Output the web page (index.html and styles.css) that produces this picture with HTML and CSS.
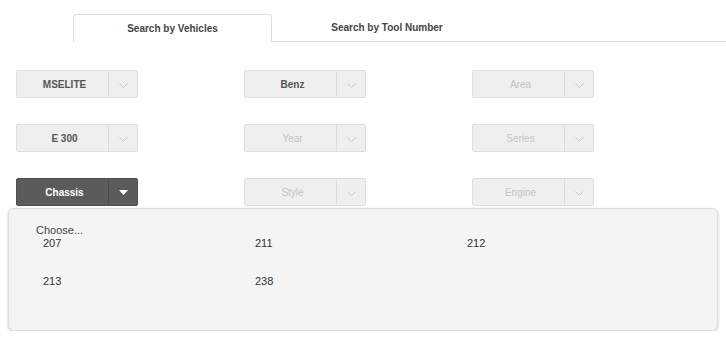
FILE: index.html
```html
<!DOCTYPE html>
<html lang="en">
<head>
  <meta charset="UTF-8" />
  <title>Tool Search</title>
  <link rel="stylesheet" href="styles.css">
</head>
<body>
  <div class="tabs">
    <div class="tab active">Search by Vehicles</div>
    <div class="tab">Search by Tool Number</div>
    <div class="tab-fill"></div>
  </div>

  <div class="selects">
    <div class="drop"><span class="drop-label">MSELITE</span><span class="drop-arrow"><svg width="9" height="5" viewBox="0 0 9 5"><polyline points="0.5,0.5 4.5,4.5 8.5,0.5" fill="none" stroke="#c6c6c6" stroke-width="1"/></svg></span></div>
    <div class="drop"><span class="drop-label">Benz</span><span class="drop-arrow"><svg width="9" height="5" viewBox="0 0 9 5"><polyline points="0.5,0.5 4.5,4.5 8.5,0.5" fill="none" stroke="#c6c6c6" stroke-width="1"/></svg></span></div>
    <div class="drop disabled"><span class="drop-label">Area</span><span class="drop-arrow"><svg width="9" height="5" viewBox="0 0 9 5"><polyline points="0.5,0.5 4.5,4.5 8.5,0.5" fill="none" stroke="#c6c6c6" stroke-width="1"/></svg></span></div>

    <div class="drop"><span class="drop-label">E 300</span><span class="drop-arrow"><svg width="9" height="5" viewBox="0 0 9 5"><polyline points="0.5,0.5 4.5,4.5 8.5,0.5" fill="none" stroke="#c6c6c6" stroke-width="1"/></svg></span></div>
    <div class="drop disabled"><span class="drop-label">Year</span><span class="drop-arrow"><svg width="9" height="5" viewBox="0 0 9 5"><polyline points="0.5,0.5 4.5,4.5 8.5,0.5" fill="none" stroke="#c6c6c6" stroke-width="1"/></svg></span></div>
    <div class="drop disabled"><span class="drop-label">Series</span><span class="drop-arrow"><svg width="9" height="5" viewBox="0 0 9 5"><polyline points="0.5,0.5 4.5,4.5 8.5,0.5" fill="none" stroke="#c6c6c6" stroke-width="1"/></svg></span></div>

    <div class="drop open"><span class="drop-label">Chassis</span><span class="drop-arrow"><svg width="9" height="5" viewBox="0 0 9 5"><polygon points="0,0 9,0 4.5,5" fill="#fff"/></svg></span></div>
    <div class="drop disabled"><span class="drop-label">Style</span><span class="drop-arrow"><svg width="9" height="5" viewBox="0 0 9 5"><polyline points="0.5,0.5 4.5,4.5 8.5,0.5" fill="none" stroke="#c6c6c6" stroke-width="1"/></svg></span></div>
    <div class="drop disabled"><span class="drop-label">Engine</span><span class="drop-arrow"><svg width="9" height="5" viewBox="0 0 9 5"><polyline points="0.5,0.5 4.5,4.5 8.5,0.5" fill="none" stroke="#c6c6c6" stroke-width="1"/></svg></span></div>
  </div>

  <div class="panel">
    <div class="choose">Choose...</div>
    <ul class="options">
      <li>207</li>
      <li>211</li>
      <li>212</li>
      <li>213</li>
      <li>238</li>
    </ul>
  </div>
</body>
</html>
```

FILE: styles.css
```css
body { margin: 0; font-family: "Liberation Sans", Arial, sans-serif; background: #fff; color: #444; }

.tabs { display: flex; padding: 14px 0 0 73px; }
.tab { height: 27px; line-height: 27px; font-size: 10px; font-weight: bold; color: #444; text-align: center; border-bottom: 1px solid #dcdcdc; box-sizing: content-box; }
.tab.active { width: 197px; border: 1px solid #dcdcdc; border-bottom: none; border-radius: 4px 4px 0 0; height: 27px; }
.tab:nth-child(2) { width: 230px; }
.tab-fill { flex: 1; border-bottom: 1px solid #dcdcdc; }

.selects { display: grid; grid-template-columns: repeat(3, 228px); row-gap: 26px; padding: 28px 0 0 16px; }
.drop { display: flex; width: 122px; height: 28px; box-sizing: border-box; background: #efefef; border: 1px solid #dedede; border-radius: 2px; font-size: 10px; font-weight: bold; color: #555; }
.drop-label { width: 91px; display: flex; align-items: center; justify-content: center; padding-left: 4px; box-sizing: border-box; }
.drop-arrow { flex: 1; display: flex; align-items: center; justify-content: center; border-left: 1px solid #dcdcdc; padding-top: 2px; }
.drop.disabled { color: #c4c4c4; font-weight: normal; }
.drop.open { background: #5b5b5b; border-color: #4e4e4e; color: #fff; }
.drop.open .drop-arrow { border-left-color: #4b4b4b; padding-top: 0; }

.panel { margin: 2px 0 0 8px; width: 710px; height: 123px; box-sizing: border-box; background: #f4f4f4; border: 1px solid #dedede; border-radius: 6px; box-shadow: 0 1px 3px rgba(0,0,0,0.2); padding: 15px 0 0 27px; font-size: 11px; color: #444; }
.choose { line-height: 13px; }
.options { list-style: none; margin: 0; padding: 0 0 0 7px; display: grid; grid-template-columns: repeat(3, 212px); grid-auto-rows: 38px; }
.options li { line-height: 13px; color: #333; }
```
